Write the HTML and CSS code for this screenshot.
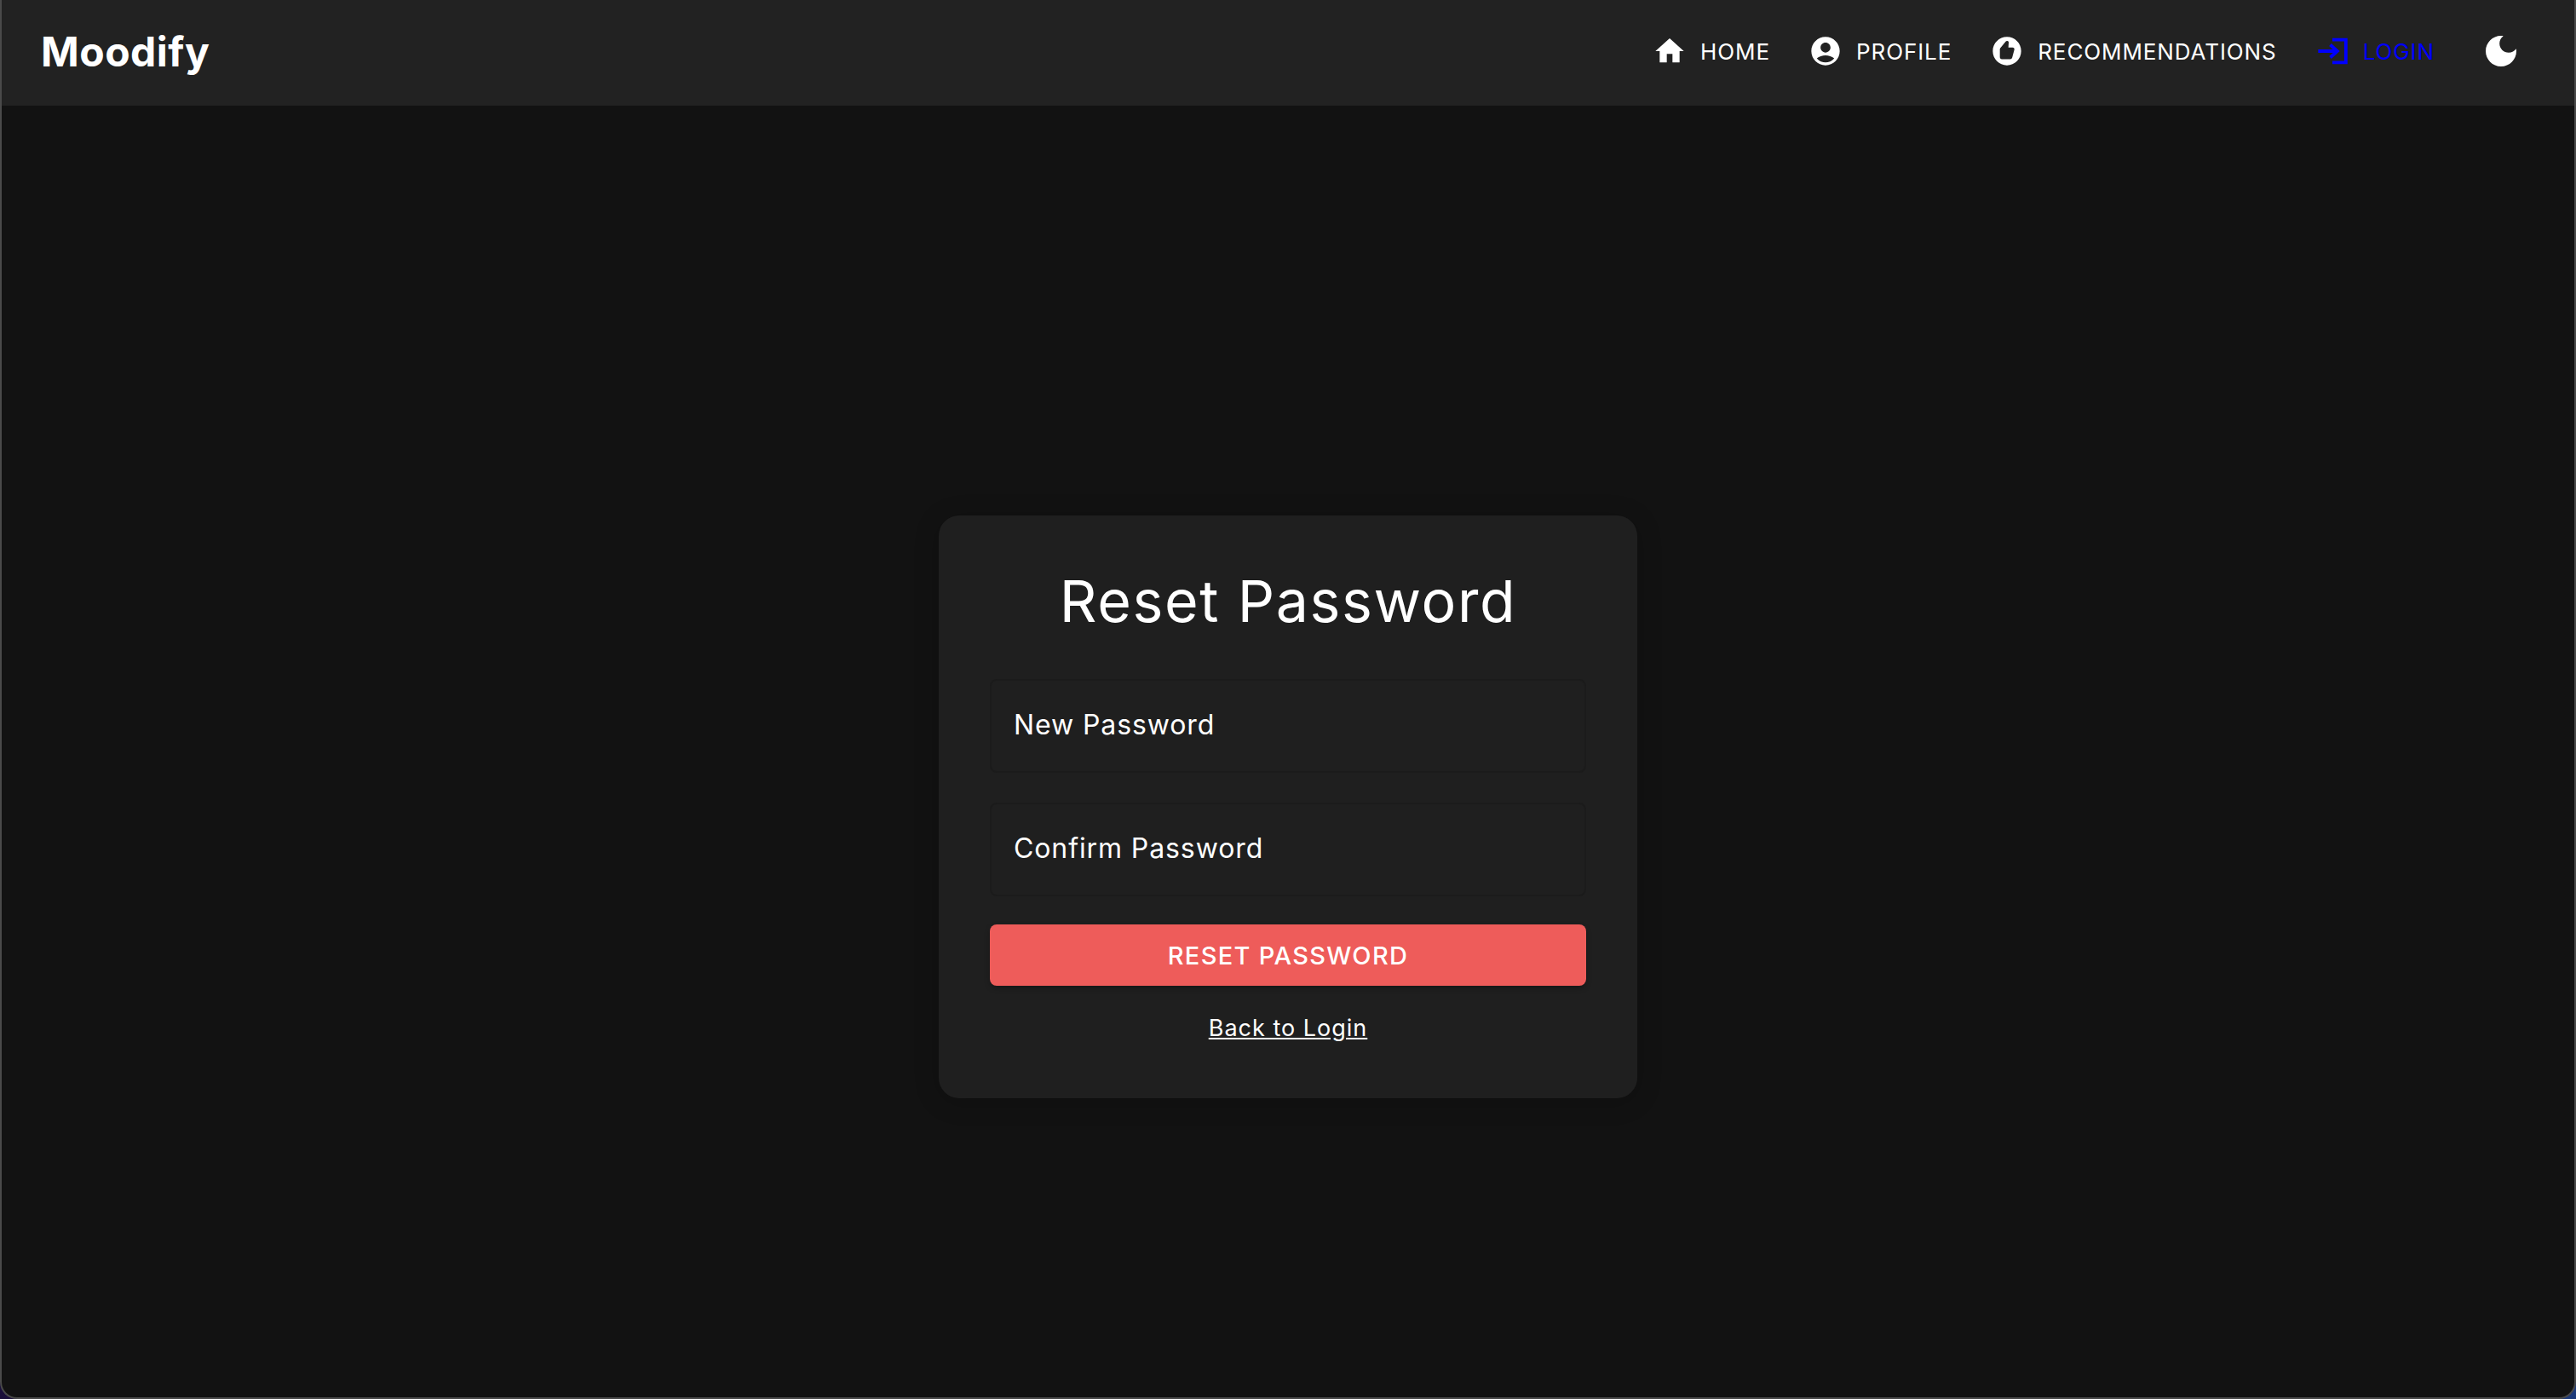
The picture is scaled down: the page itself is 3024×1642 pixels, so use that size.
FILE: index.html
```html
<!DOCTYPE html>
<html lang="en">
<head>
<meta charset="utf-8">
<title>Moodify</title>
<link rel="stylesheet" href="styles.css">
</head>
<body>
<div class="frame">
  <header class="navbar">
    <a class="brand" href="#">Moodify</a>
    <nav class="nav-links">
      <a class="nav-link" href="#"><svg class="icon" viewBox="0 0 24 24"><path d="M10 20v-6h4v6h5v-8h3L12 3 2 12h3v8z"/></svg><span>HOME</span></a>
      <a class="nav-link" href="#"><svg class="icon" viewBox="0 0 24 24"><path d="M12 2C6.48 2 2 6.48 2 12s4.48 10 10 10 10-4.48 10-10S17.52 2 12 2zm0 4c1.93 0 3.5 1.57 3.5 3.5S13.93 13 12 13s-3.5-1.57-3.5-3.5S10.07 6 12 6zm0 14c-2.03 0-4.43-.82-6.14-2.88C7.55 15.8 9.68 15 12 15s4.45.8 6.14 2.12C16.43 19.18 14.03 20 12 20z"/></svg><span>PROFILE</span></a>
      <a class="nav-link" href="#"><svg class="icon" viewBox="0 0 24 24"><path fill-rule="evenodd" d="M12 2C6.48 2 2 6.48 2 12s4.48 10 10 10 10-4.48 10-10S17.52 2 12 2zM7 16.2v-5.4c0-.4.1-.7.4-1l3.7-4.5c.4-.5 1-.6 1.5-.3.5.2.7.7.6 1.2L13 9.4h3c.9 0 1.4.8 1.2 1.6l-1.5 5.5c-.2.7-.8 1.2-1.5 1.2H8.4c-.8 0-1.4-.7-1.4-1.5z"/></svg><span>RECOMMENDATIONS</span></a>
      <a class="nav-link nav-link-active" href="#"><svg class="icon icon-stroke" viewBox="0 0 24 24"><path d="M2 12h13M10.5 7.5l5 4.5-5 4.5M12 4h9.5v16H12"/></svg><span>LOGIN</span></a>
      <button class="theme-toggle" type="button" aria-label="Toggle theme"><svg class="icon-moon" viewBox="0 0 24 24"><path d="M12 3c-4.97 0-9 4.03-9 9s4.03 9 9 9 9-4.03 9-9c0-.46-.04-.92-.1-1.36-.98 1.37-2.58 2.26-4.4 2.26-2.98 0-5.4-2.42-5.4-5.4 0-1.81.89-3.42 2.26-4.4-.44-.06-.9-.1-1.36-.1z"/></svg></button>
    </nav>
  </header>
  <main class="main">
    <section class="card">
      <h1 class="title">Reset Password</h1>
      <div class="field"><span class="field-label">New Password</span></div>
      <div class="field"><span class="field-label">Confirm Password</span></div>
      <button class="submit" type="button">RESET PASSWORD</button>
      <a class="back-link" href="#">Back to Login</a>
    </section>
  </main>
</div>
</body>
</html>
```
FILE: styles.css
```css
* { box-sizing: border-box; }
html, body { margin: 0; height: 100%; }
body {
  background: linear-gradient(to right, #1a0f3a, #1d3a7a);
  font-family: "Inter", "Liberation Sans", sans-serif;
  color: #fff;
  overflow: hidden;
}
a { color: inherit; }

.frame {
  height: 100vh;
  background: #121212;
  border: 2px solid #4a4a4a;
  border-top: 0;
  border-radius: 0 0 20px 20px;
  overflow: hidden;
}

.navbar {
  height: 124px;
  background: #222222;
  display: flex;
  align-items: center;
  justify-content: space-between;
  padding: 0 48px 4px;
}
.brand {
  margin-left: -2px;
  font-size: 48px;
  font-weight: 700;
  letter-spacing: .5px;
  text-decoration: none;
}
.nav-links { display: flex; align-items: center; }
.nav-link {
  display: flex;
  align-items: center;
  gap: 16px;
  margin-right: 45px;
  font-size: 26px;
  letter-spacing: .9px;
  text-decoration: none;
}
.nav-link-active { color: #0000ff; margin-right: 54px; }
.icon { width: 40px; height: 40px; fill: currentColor; }
.icon-stroke { fill: none; stroke: currentColor; stroke-width: 2.3; }
.theme-toggle { background: none; border: 0; padding: 0; margin-right: 14px; display: flex; }
.icon-moon { width: 48px; height: 48px; fill: #fff; }

.main { display: flex; justify-content: center; padding-top: 481px; }
.card {
  width: 820px;
  height: 684px;
  background: #1f1f1f;
  border-radius: 24px;
  padding: 64px 60px 60px;
  display: flex;
  flex-direction: column;
  box-shadow: 0 4px 30px rgba(0,0,0,.2);
}
.title {
  margin: 0 0 56px;
  font-size: 68px;
  font-weight: 400;
  line-height: 72px;
  letter-spacing: 1.6px;
  text-align: center;
}
.field {
  height: 110px;
  margin-bottom: 35px;
  border: 2px solid #1b1b1b;
  border-radius: 8px;
  padding: 0 26px 3px;
  display: flex;
  align-items: center;
}
.field-label { font-size: 32px; letter-spacing: .9px; }
.submit {
  height: 72px;
  margin-top: -2px;
  background: #ee5c5a;
  color: #fff;
  border: 0;
  border-radius: 8px;
  font: inherit;
  font-size: 29px;
  font-weight: 500;
  letter-spacing: 1.3px;
  box-shadow: 0 3px 6px rgba(0,0,0,.25);
}
.back-link { margin-top: 33px; align-self: center; font-size: 27px; letter-spacing: 1px; }
```
